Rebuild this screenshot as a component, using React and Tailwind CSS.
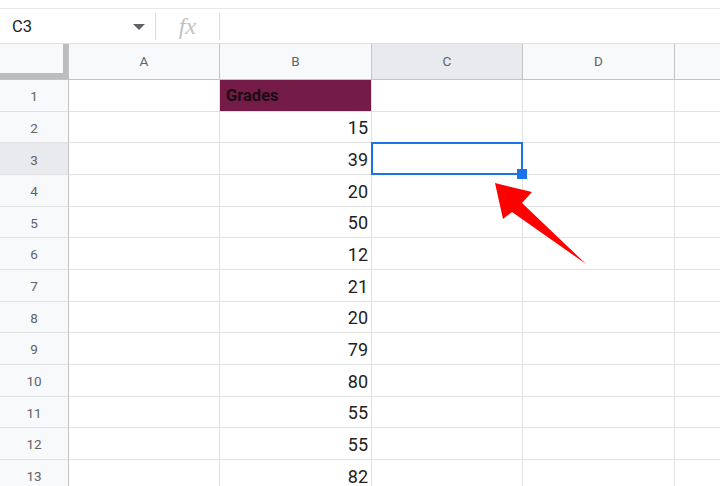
import React from "react";

const grades = ["Grades", 15, 39, 20, 50, 12, 21, 20, 79, 80, 55, 55, 82];
const cols = [
  { key: "A", w: "w-[151px]" },
  { key: "B", w: "w-[152px]" },
  { key: "C", w: "w-[151px]" },
  { key: "D", w: "w-[152px]" },
];

function Row({ n, value }) {
  const selected = n === 3;
  return (
    <div className="flex h-[31.67px]">
      <div
        className={`w-[69px] shrink-0 border-r border-b border-r-[#c4c4c4] border-b-[#e1e1e1] flex items-center justify-center pt-[2px] text-[13.5px] text-[#5f6368] ${
          selected ? "bg-[#e8eaed]" : "bg-[#f8f9fa]"
        }`}
      >
        {n}
      </div>
      <div className="w-[151px] shrink-0 border-r border-b border-[#e2e2e2]" />
      {n === 1 ? (
        <div className="w-[152px] shrink-0 border-r border-b border-[#e2e2e2] bg-[#741b47] flex items-center pt-[2px] px-[6px] text-[16.5px] font-bold text-[#1c0a12]">
          {value}
        </div>
      ) : (
        <div className="w-[152px] shrink-0 border-r border-b border-[#e2e2e2] flex items-center justify-end pt-[2px] pr-[3px] text-[18px] text-[#222]">
          {value}
        </div>
      )}
      <div className="w-[151px] shrink-0 border-r border-b border-[#e2e2e2] relative">
        {selected && (
          <div className="absolute z-10 left-[-1px] top-[-1px] right-[-1px] bottom-[-1px] border-2 border-[#1a73e8]">
            <div className="absolute right-[-6px] bottom-[-6px] w-[10px] h-[10px] bg-[#1a73e8]" />
          </div>
        )}
      </div>
      <div className="w-[152px] shrink-0 border-r border-b border-[#e2e2e2]" />
      <div className="flex-1 border-b border-[#e2e2e2]" />
    </div>
  );
}

export default function App() {
  return (
    <div
      className="relative w-[720px] h-[486px] overflow-hidden bg-white"
      style={{ fontFamily: "Roboto, 'Liberation Sans', sans-serif" }}
    >
      <div className="h-[9px] border-b border-[#e8e8e8]" />
      {/* formula bar */}
      <div className="h-[35px] border-b border-[#e0e0e0] flex items-center">
        <div className="w-[155px] h-full flex items-center justify-between pl-[12px] pr-[10px] pt-[2px]">
          <span className="text-[16.5px] text-[#222]">C3</span>
          <svg width="12" height="6" viewBox="0 0 12 6">
            <path d="M0 0h12L6 6z" fill="#5f6368" />
          </svg>
        </div>
        <div className="w-px h-[27px] bg-[#dadce0]" />
        <div className="w-[63px] flex items-center justify-center">
          <span
            className="text-[24px] italic text-[#c2c2c2] leading-none"
            style={{ fontFamily: "'Liberation Serif', serif" }}
          >
            fx
          </span>
        </div>
        <div className="w-px h-[27px] bg-[#dadce0]" />
      </div>
      {/* column headers */}
      <div className="flex h-[36px] border-b border-[#c4c4c4] bg-[#f8f9fa]">
        <div className="w-[69px] shrink-0 border-r border-[#c4c4c4] flex">
          <div className="w-[63px] flex flex-col">
            <div className="flex-1" />
            <div className="h-[6px] bg-[#bdbdbd]" />
          </div>
          <div className="w-[5px] bg-[#bdbdbd]" />
        </div>
        {cols.map((c) => (
          <div
            key={c.key}
            className={`${c.w} shrink-0 border-r border-[#c4c4c4] flex items-center justify-center text-[13.5px] text-[#5f6368] ${
              c.key === "C" ? "bg-[#e8eaed]" : ""
            }`}
          >
            {c.key}
          </div>
        ))}
        <div className="flex-1" />
      </div>
      {grades.map((v, i) => (
        <Row key={i} n={i + 1} value={v} />
      ))}
      {/* annotation arrow */}
      <svg className="absolute z-20 left-0 top-0" width="720" height="486">
        <polygon
          points="495,183 532,192 522,203 586,264 512,212 503,219"
          fill="#ff0000"
        />
      </svg>
    </div>
  );
}
